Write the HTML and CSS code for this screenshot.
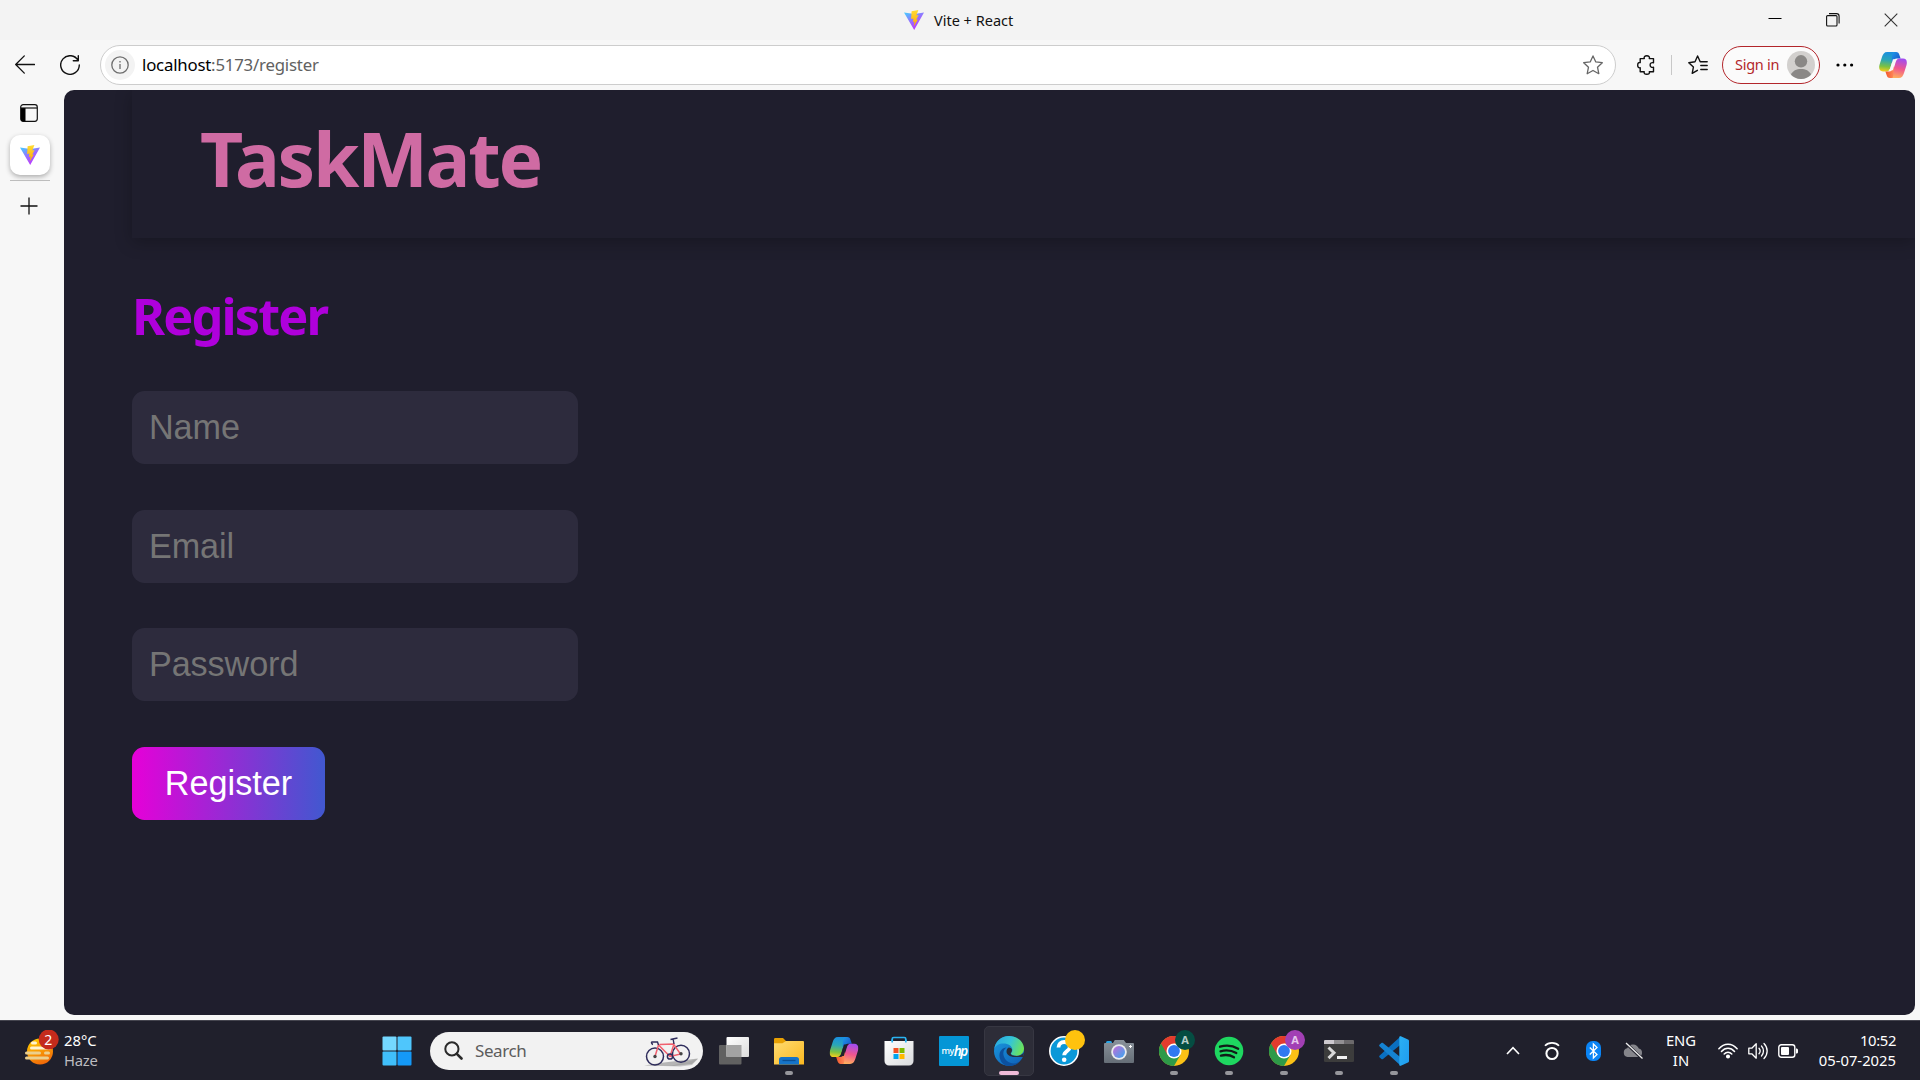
FILE: index.html
```html
<!DOCTYPE html>
<html lang="en">
<head>
<meta charset="utf-8">
<title>Vite + React</title>
<link rel="stylesheet" href="styles.css">
</head>
<body>
<svg class="defs" aria-hidden="true">
  <defs>
    <linearGradient id="vite-body" x1="0" y1="0" x2=".6" y2="1"><stop offset="0" stop-color="#41d1ff"/><stop offset=".55" stop-color="#9a6bff"/><stop offset="1" stop-color="#bd34fe"/></linearGradient>
    <linearGradient id="vite-bolt" x1="0" y1="0" x2="0" y2="1"><stop offset="0" stop-color="#ffdd35"/><stop offset="1" stop-color="#ffa800"/></linearGradient>
    <linearGradient id="cp-left" x1=".4" y1="0" x2=".3" y2="1"><stop offset="0" stop-color="#1a8fe0"/><stop offset=".4" stop-color="#2aa6b8"/><stop offset=".75" stop-color="#7cc142"/><stop offset="1" stop-color="#f5cd1c"/></linearGradient>
    <linearGradient id="cp-right" x1=".6" y1="0" x2=".4" y2="1"><stop offset="0" stop-color="#a24cf0"/><stop offset=".5" stop-color="#f0568e"/><stop offset="1" stop-color="#ffb05c"/></linearGradient>
    <linearGradient id="cp-top" x1="0" y1="0" x2="1" y2="1"><stop offset="0" stop-color="#1c9be8"/><stop offset="1" stop-color="#1b3fc4"/></linearGradient>
    <linearGradient id="cp-bot" x1="0" y1="0" x2="1" y2="0"><stop offset="0" stop-color="#f2572b"/><stop offset="1" stop-color="#ff8a5c"/></linearGradient>
    <linearGradient id="sun" x1=".3" y1="0" x2=".7" y2="1"><stop offset="0" stop-color="#ffc800"/><stop offset="1" stop-color="#f0640a"/></linearGradient>
    <linearGradient id="folder" x1="0" y1="0" x2="1" y2="1"><stop offset="0" stop-color="#ffdc72"/><stop offset="1" stop-color="#fbb820"/></linearGradient>
    <linearGradient id="bag" x1="0" y1="0" x2="1" y2="1"><stop offset="0" stop-color="#fff"/><stop offset="1" stop-color="#d9dadd"/></linearGradient>
    <linearGradient id="edge-top" x1="0" y1=".3" x2="1" y2=".6"><stop offset="0" stop-color="#2aa9e0"/><stop offset=".5" stop-color="#35c5d6"/><stop offset="1" stop-color="#6fe552"/></linearGradient>
    <linearGradient id="edge-mid" x1="0" y1="0" x2=".8" y2="1"><stop offset="0" stop-color="#1b9be0"/><stop offset="1" stop-color="#0f62b8"/></linearGradient>
    <linearGradient id="cam" x1="0" y1="0" x2="0" y2="1"><stop offset="0" stop-color="#89929b"/><stop offset="1" stop-color="#666e77"/></linearGradient>
    <linearGradient id="lens" x1="0" y1="0" x2="1" y2="1"><stop offset="0" stop-color="#c56bd6"/><stop offset="1" stop-color="#38a8f0"/></linearGradient>
    <linearGradient id="tv" x1="0" y1="0" x2="1" y2="1"><stop offset="0" stop-color="#fff"/><stop offset="1" stop-color="#dcdcdc"/></linearGradient>
    <linearGradient id="code" x1="0" y1="0" x2="1" y2="1"><stop offset="0" stop-color="#2bb0f2"/><stop offset="1" stop-color="#1f9cf0"/></linearGradient>
    <symbol id="vite" viewBox="0 0 20 20"><path d="M0 2.6 10.2 20 20 2.4 10.5 4.1z" fill="url(#vite-body)"/><path d="M14.4 0 7.6 1.3 7.1 8.9 9.4 8.4 8.9 11.9 10.6 11.4 9.7 16.4 13.9 9.4 12.2 9.7 14.6 5 12.3 5.5z" fill="url(#vite-bolt)"/></symbol>
    <symbol id="copilot" viewBox="0 0 28 26"><path d="M18.2 0H8.2C5.2 0 4 2 3 5L.6 12.5C-.6 16.6.6 19.4 4 19.4h3.4c2.2 0 3.2-1.4 3.8-3.2L15 4c.5-2 1.500-4 3.200-4z" fill="url(#cp-left)"/><path d="M14.500 0H17c2 0 2.900 1.200 3.400 3l1.200 3.600h-3.800c-2.200 0-3 1.400-3.600 3.200l-1.200 3.400c0-5-1-11.200 1.500-13.200z" fill="url(#cp-top)"/><path d="M9.800 26h10c3 0 4.200-2 5.200-5l2.400-7.500C28.600 9.400 27.400 6.600 24 6.600h-3.400c-2.200 0-3.200 1.400-3.800 3.200L13 22c-.5 2-1.500 4-3.200 4z" fill="url(#cp-right)"/><path d="M13.500 26H11c-2 0-2.900-1.200-3.400-3l-1.200-3.600h3.800c2.200 0 3-1.400 3.600-3.200l1.200-3.400c-.3 5-.3 11.200-1.500 13.200z" fill="url(#cp-bot)"/><path class="hole" d="M13.900 7.200h4.300c-1.100.4-1.600 1.400-2 2.600l-2.400 8.500H9.600c1-.4 1.500-1.200 1.800-2.200z"/></symbol>
    <symbol id="chrome" viewBox="0 0 30 30"><circle cx="15" cy="15" r="15" fill="#fbc116"/><path d="M15 15 2 7.500A15 15 0 0 0 15 30l6.500-11.200z" fill="#2d9a48"/><path d="M15 15 8.500 18.700 2 7.500A15 15 0 0 1 28 7.500H15z" fill="#e33b2e"/><circle cx="15" cy="15" r="7.500" fill="#fff"/><circle cx="15" cy="15" r="5.900" fill="#3078f0"/></symbol>
  </defs>
</svg>

<div class="titlebar">
  <div class="tab-title"><svg class="i20"><use href="#vite"/></svg><span class="title-text">Vite + React</span></div>
  <div class="window-buttons">
    <svg width="14" height="14" viewBox="0 0 14 14"><path d="M.5 5.500h13" stroke="#000" stroke-width="1"/></svg>
    <svg width="14" height="14" viewBox="0 0 14 14" fill="none" stroke="#111" stroke-width="1.100"><rect x=".6" y="2.600" width="10.400" height="10.400" rx="1"/><path d="M3 .6h7.500a2.600 2.600 0 0 1 2.600 2.600V10.500"/></svg>
    <svg width="14" height="14" viewBox="0 0 14 14"><path d="M.7.700l12.600 12.600M13.300.700.7 13.300" stroke="#333" stroke-width="1.100"/></svg>
  </div>
</div>

<div class="toolbar">
  <svg class="back" width="20" height="20" viewBox="0 0 20 20" fill="none" stroke="#111" stroke-width="1.300" stroke-linecap="round" stroke-linejoin="round"><path d="M19.500 9.500H.8M9.300.900.7 9.500l8.600 8.600"/></svg>
  <svg class="reload" width="20" height="20" viewBox="0 0 20 20" fill="none" stroke="#111" stroke-width="1.400" stroke-linecap="round" stroke-linejoin="round"><path d="M18.200 5.600A9.300 9.300 0 1 0 19.300 10M18.300.700v5h-5"/></svg>
  <div class="address">
    <span class="info"><svg width="18" height="18" viewBox="0 0 18 18" fill="none" stroke="#6e6e6e" stroke-width="1.300"><circle cx="9" cy="9" r="8.200"/><path d="M9 8v5M9 5v1.400"/></svg></span>
    <span class="url"><span class="host">localhost</span>:5173/register</span>
    <svg class="star" width="20" height="20" viewBox="0 0 20 20" fill="none" stroke="#666" stroke-width="1.300" stroke-linejoin="round"><path d="M10 .9l2.800 6 6.500.8-4.800 4.500 1.300 6.500L10 15.500l-5.800 3.200 1.300-6.500L.7 7.700l6.500-.8z"/></svg>
  </div>
  <svg class="puzzle" width="18" height="20" viewBox="0 0 18 20" fill="none" stroke="#111" stroke-width="1.400" stroke-linejoin="round"><path d="M3.200 3.600h4.100C6.600 1.800 8 .8 9.800.8s3.200 1 2.500 2.800h4.200v4.200c-2-.7-3.400.5-3.400 2.200s1.400 2.900 3.400 2.200v4.600h-4.200c.7 1.800-.7 2.500-2.500 2.500s-3.200-.7-2.500-2.500H3.200v-4C1.500 13.200.7 12 .7 10.200s.8-3 2.500-2.600z"/></svg>
  <span class="divider"></span>
  <svg class="favs" width="20" height="20" viewBox="0 0 20 20" fill="none" stroke="#111" stroke-width="1.400" stroke-linejoin="round" stroke-linecap="round"><path d="M12.200 6.800 9.600 1 7 6.800.8 7.700l4.600 4.400-1.200 6.300 5.200-3.100M12.200 6.800h7M12.800 10.500h6.400M12.800 14.500h6.400"/></svg>
  <div class="signin"><span class="signin-text">Sign in</span>
    <svg width="28" height="28" viewBox="0 0 28 28"><circle cx="14" cy="14" r="14" fill="#d2d0ce"/><circle cx="14" cy="10.300" r="6.200" fill="#8a8886"/><path d="M4 23.800C5.500 19.700 9.500 18 14 18s8.500 1.700 10 5.800A14 14 0 0 1 4 23.800z" fill="#8a8886"/></svg>
  </div>
  <svg class="dots" width="18" height="4" viewBox="0 0 18 4"><circle cx="2" cy="2" r="1.600"/><circle cx="8.800" cy="2" r="1.600"/><circle cx="15.600" cy="2" r="1.600"/></svg>
  <svg class="copilot-btn" width="28" height="26"><use href="#copilot"/></svg>
</div>

<div class="main">
  <aside class="sidebar">
    <svg class="tabs-icon" width="18" height="18" viewBox="0 0 18 18"><rect x=".7" y=".7" width="16.600" height="16.600" rx="2.500" fill="#f7f7f7" stroke="#111" stroke-width="1.200"/><path d="M1 4h4.500v13.300H3A2 2 0 0 1 1 15z"/><path d="M1 4h16" stroke="#111" stroke-width="1.200"/></svg>
    <div class="active-tab"><svg class="i20"><use href="#vite"/></svg></div>
    <span class="side-line"></span>
    <svg class="plus" width="18" height="18" viewBox="0 0 18 18"><path d="M.5 9h17M9 .5v17" stroke="#111" stroke-width="1.300"/></svg>
  </aside>
  <div class="page">
    <nav class="navbar"><h1 class="brand">TaskMate</h1></nav>
    <h2 class="heading">Register</h2>
    <form class="form">
      <input type="text" placeholder="Name">
      <input type="email" placeholder="Email">
      <input type="password" placeholder="Password">
      <button type="button">Register</button>
    </form>
  </div>
</div>

<footer class="taskbar">
  <div class="weather">
    <svg width="34" height="36" viewBox="0 0 34 36"><circle cx="15" cy="21.500" r="13" fill="url(#sun)"/><path d="M7.500 13h3M6.500 18h18" stroke="#fff3d0" stroke-width="3" stroke-linecap="round"/><path d="M20.500 23h3M1.500 23h13M1.500 28h21" stroke="#eccf8c" stroke-width="3" stroke-linecap="round"/><circle cx="23.700" cy="9.500" r="10" fill="#c42b1c"/><text x="23.200" y="14.500" text-anchor="middle" font-size="14" fill="#fff">2</text></svg>
    <div class="weather-text"><span>28°C</span><span class="cond">Haze</span></div>
  </div>
  <div class="start"><svg width="30" height="30" viewBox="0 0 30 30"><rect x=".5" y=".5" width="14" height="14" rx="1" fill="#74d8ff"/><rect x="15.500" y=".5" width="14" height="14" rx="1" fill="#4fc6fc"/><rect x=".5" y="15.500" width="14" height="14" rx="1" fill="#40bffb"/><rect x="15.500" y="15.500" width="14" height="14" rx="1" fill="#1499f7"/></svg></div>
  <div class="search">
    <svg width="19" height="19" viewBox="0 0 19 19" fill="none" stroke="#2a2a2a"><circle cx="7.900" cy="7.900" r="6.600" stroke-width="2"/><path d="M12.800 12.800l4.700 4.700" stroke-width="2.600" stroke-linecap="round"/></svg>
    <span class="search-text">Search</span>
    <svg class="bike" width="55" height="30" viewBox="0 0 55 30" fill="none"><path d="M0 28.500 20 25.500 54 21.500 48 27 30 29z" fill="#b5b5b5"/><path d="M2 28.500h26L50 23l4-1.200-6 6.200-12 1.500z" fill="#9b9b9b" opacity=".5"/><circle cx="11" cy="19.500" r="8.500" stroke="#2f2d5c" stroke-width="1.500"/><circle cx="37" cy="16.700" r="8.500" stroke="#2f2d5c" stroke-width="1.500"/><path d="M11 19.500 14.500 8 26 19.500l10.500-2.500-7-10-14 .5M26 19.500 30 7" stroke="#f0606e" stroke-width="1.500"/><path d="M14.500 8 13.500 5H8c-1 0-.5 2 1 2.500M30 7l-.8-4.500M26.500 2.500l7-1.500" stroke="#2f2d5c" stroke-width="1.400"/><circle cx="26" cy="19.500" r="2.600" stroke="#2f2d5c" stroke-width="1.500"/><circle cx="11" cy="19.500" r="1.700" fill="#444"/><circle cx="37" cy="16.700" r="1.700" fill="#444"/></svg>
  </div>
  <div class="apps">
    <div class="app"><svg viewBox="0 0 30 30"><rect x="0" y="9" width="22.500" height="19.500" rx="1" fill="#616161"/><rect x="7.500" y="1" width="22.500" height="20" rx="1" fill="url(#tv)"/><path d="M7.500 9h15v12h-15z" fill="#a3a3a3"/></svg></div>
    <div class="app running"><svg viewBox="0 0 30 30"><path d="M0 3.200A1.200 1.200 0 0 1 1.200 2H9l3.500 3.500V10H0z" fill="#e8a003"/><path d="M0 7.200h8.500L12 5h17a1 1 0 0 1 1 1v22.500H0z" fill="url(#folder)"/><path d="M5 28.500v-5A2.500 2.500 0 0 1 7.500 21h15a2.500 2.500 0 0 1 2.500 2.500v5z" fill="#1674c9"/><path d="M8.500 24.500h13" stroke="#0b4f94" stroke-width="1.300"/></svg></div>
    <div class="app dark-hole"><svg viewBox="-.5 0 29 27"><use href="#copilot" width="28" height="26"/></svg></div>
    <div class="app"><svg viewBox="0 0 30 30"><path d="M8.200 7V3a1.500 1.500 0 0 1 1.500-1.500h10.600A1.500 1.500 0 0 1 21.800 3v4" fill="none" stroke="#2ab4f2" stroke-width="1.700"/><path d="M.5 5h29v20a4.500 4.500 0 0 1-4.500 4.500H5A4.500 4.500 0 0 1 .5 25z" fill="url(#bag)"/><path d="M8.200 6.500V3.500M21.800 6.500V3.500" stroke="#2ab4f2" stroke-width="1.700"/><path d="M9.500 12h5v5h-5z" fill="#f25022"/><path d="M15.500 12h5v5h-5z" fill="#7fba00"/><path d="M9.500 18h5v5h-5z" fill="#00a4ef"/><path d="M15.500 18h5v5h-5z" fill="#ffb900"/></svg></div>
    <div class="app"><span class="myhp"><span class="my">my</span><span class="hp">hp</span></span></div>
    <div class="app active"><svg viewBox="0 0 30 30"><circle cx="15" cy="15" r="15" fill="url(#edge-mid)"/><path d="M.2 13C1.500 5 7.500 0 15 0c9 0 15 6.500 15 12.500 0 4.500-3.500 7.300-7.500 7.300-3.500 0-5.500-1.300-5.500-2.300 0-.8 1.400-1.300 1.400-3.500 0-3.800-4.200-6.500-8.900-6.500C5 7.500 1.500 9.500.2 13z" fill="url(#edge-top)"/><path d="M12.500 11.500c-2.500 1.600-3.600 4.500-3 7.500.8 4.500 5 8.500 10.500 8.500 3 0 5.800-1.600 7.700-4.400C25 27.500 20.500 30 15 30 9 30 5 24 5.500 18.500c.4-3.800 3-6.700 7-7z" fill="#0c509e"/><path d="M18 14c0 2.200-1.300 2.700-1.300 3.500 0 1.200 2.200 2.500 5.800 2.500 3.300 0 5.800-1.200 7.500-3.500l-1 4.500h-8.500c-4 0-8-2.200-8-5.500 0-2 .9-3.300 2.200-4 1.800.2 3.300 1.200 3.300 2.500z" fill="#2a2d38"/></svg></div>
    <div class="app"><svg viewBox="0 0 30 30"><circle cx="15" cy="15" r="14.200" fill="#0a98d8" stroke="#fff" stroke-width="1.600"/><path d="M9.500 11.500c0-3.500 2.500-5.500 5.700-5.500s5.600 2 5.600 4.900c0 4-5.600 4.100-5.600 8.300" fill="none" stroke="#fff" stroke-width="3.800"/><circle cx="15.200" cy="23.800" r="2.300" fill="#fff"/></svg><span class="badge gold"></span></div>
    <div class="app"><svg viewBox="0 0 30 30"><path d="M2 8V6.500A1.500 1.500 0 0 1 3.500 5h3A1.500 1.500 0 0 1 8 6.500V8z" fill="#27a5e6"/><path d="M1 7h8l1.800-3h9L22 7h7a1 1 0 0 1 1 1v18a1 1 0 0 1-1 1H1a1 1 0 0 1-1-1V8a1 1 0 0 1 1-1z" fill="url(#cam)"/><circle cx="15" cy="16" r="7.800" fill="#e9ebee"/><circle cx="15" cy="16" r="6" fill="url(#lens)"/><path d="M26.500 9v3M25 10.500h3" stroke="#fff"/></svg></div>
    <div class="app running"><svg viewBox="0 0 30 30"><use href="#chrome"/></svg><span class="badge green">A</span></div>
    <div class="app running"><svg viewBox="0 0 30 30"><circle cx="15" cy="15" r="14.300" fill="#1ed760"/><path d="M6 10.700c6-1.700 13-1 18.200 2M6.500 15.300c5.300-1.500 11-.9 15.800 1.700M7 19.700c4.500-1.200 9.200-.7 13 1.600" fill="none" stroke="#111c18" stroke-width="2.300" stroke-linecap="round"/></svg></div>
    <div class="app running"><svg viewBox="0 0 30 30"><use href="#chrome"/></svg><span class="badge purple">A</span></div>
    <div class="app running"><svg viewBox="0 0 30 30"><rect x="0" y="4" width="30" height="22" rx="1.200" fill="#3c3c3c"/><path d="M0 8V5.200A1.200 1.200 0 0 1 1.200 4H10v4z" fill="#cdc9ce"/><path d="M10 4h10v4H10z" fill="#929092"/><path d="M20 4h8.800A1.200 1.200 0 0 1 30 5.200V8H20z" fill="#6c6a6c"/><path d="M4.500 11.500l5.500 5.300-5.500 5.300" fill="none" stroke="#d8d8d8" stroke-width="3"/><path d="M13 21.500h10" stroke="#f2f2f2" stroke-width="3"/></svg></div>
    <div class="app running"><svg viewBox="0 0 30 30"><path d="M21.800.3 0.700 19.500c-.7.600-.7 1.500 0 2l1.700 1.500c.5.400 1.100.400 1.600 0L21.800 8.500z" fill="#0a6fc0"/><path d="M21.800 29.700.7 10.500c-.7-.6-.7-1.500 0-2L2.400 7c.5-.4 1.100-.4 1.600 0l17.800 14.500z" fill="#1583d2"/><path d="M21.800.3 29 3.500a1.500 1.500 0 0 1 1 1.400v20.200a1.500 1.500 0 0 1-1 1.400l-7.200 3.200c-.8.300-1.500-.1-1.500-1V1.300c0-.8.700-1.300 1.500-1z" fill="url(#code)"/></svg></div>
  </div>
  <div class="tray">
    <svg class="chev" width="14" height="9" viewBox="0 0 14 9"><path d="M1 8l6-6.300L13 8" fill="none" stroke="#fff" stroke-width="1.600"/></svg>
    <svg class="ring" width="16" height="20" viewBox="0 0 16 20" fill="none" stroke="#fff"><circle cx="8" cy="12.500" r="5.600" stroke-width="2"/><path d="M1 4.800C4.500.800 11.500.800 15 4.800" stroke-width="1.700"/></svg>
    <svg class="bt" width="15" height="20" viewBox="0 0 15 20"><rect width="15" height="20" rx="6.500" fill="#0a84f5"/><path d="M3.800 6.500l7.200 7-3.600 3.500V3L11 6.500l-7.200 7" fill="none" stroke="#fff" stroke-width="1.300"/></svg>
    <svg class="cloud" width="20" height="17" viewBox="0 0 20 17"><path d="M4.500 15A4.500 4.500 0 0 1 4.200 6.200 6.200 6.200 0 0 1 15.800 6.600 4.300 4.300 0 0 1 15.500 15z" fill="#85858b"/><path d="M2.500.700l16.500 15.800" stroke="#20202c" stroke-width="3"/><path d="M3 1l16.500 15.500" stroke="#eee" stroke-width="1.300"/></svg>
    <div class="lang"><span>ENG</span><span>IN</span></div>
    <svg class="wifi" width="20" height="16" viewBox="0 0 20 16" fill="none" stroke="#fff" stroke-width="1.500" stroke-linecap="round"><path d="M.9 5.800C6-.400 14-.400 19.100 5.800M3.500 8.500C7.200 4.200 12.800 4.200 16.500 8.500M6.200 11C8.400 8.600 11.600 8.600 13.800 11"/><circle cx="10" cy="13.500" r="1.300" fill="#fff"/></svg>
    <svg class="vol" width="20" height="18" viewBox="0 0 20 18" fill="none" stroke="#fff" stroke-width="1.300" stroke-linecap="round" stroke-linejoin="round"><path d="M.8 6.200h3l4.400-4.400v14.400l-4.400-4.400h-3zM11 6.300c1.300 1.500 1.300 3.900 0 5.400M13.500 4c2.600 2.800 2.600 7.200 0 10M16 1.500c4.200 4.200 4.200 10.800 0 15"/></svg>
    <svg class="bat" width="20" height="14" viewBox="0 0 20 14"><rect x=".8" y=".8" width="16" height="12.400" rx="2.500" fill="none" stroke="#fff" stroke-width="1.400"/><rect x="3" y="3" width="8" height="8" rx="1" fill="#fff"/><path d="M18 4.500c1.300 0 2 .7 2 1.600v1.800c0 .9-.7 1.600-2 1.600z" fill="#fff"/></svg>
    <div class="clock"><span class="time">10:52</span><span>05-07-2025</span></div>
  </div>
</footer>
</body>
</html>
```
FILE: styles.css
```css
* { box-sizing: border-box; }
body { margin: 0; width: 1920px; height: 1080px; overflow: hidden; display: flex; flex-direction: column; background: #f7f7f7; font-family: "Noto Sans", "Open Sans", sans-serif; --hole: #f7f7f7; }
svg { display: block; flex: none; }
.defs { position: absolute; width: 0; height: 0; }
.hole { fill: var(--hole); }
.dark-hole { --hole: #20202c; }
.i20 { width: 20px; height: 20px; }

.titlebar { height: 40px; flex: none; display: flex; align-items: center; background: #f3f3f3; }
.tab-title { display: flex; align-items: center; gap: 10px; margin-left: 904px; width: 600px; }
.title-text { font-size: 14.500px; line-height: 20px; color: #111; }
.window-buttons { display: flex; gap: 44px; margin-left: auto; padding-right: 22px; }

.toolbar { height: 50px; flex: none; display: flex; align-items: center; }
.back { margin-left: 15px; }
.reload { margin: 0 20px 0 25px; }
.address { width: 1516px; height: 40px; display: flex; align-items: center; padding: 0 12px 0 4px; border: 1px solid #cdcdcd; border-radius: 20px; background: #fff; }
.info { width: 30px; height: 30px; border-radius: 50%; background: #f3f3f3; display: flex; align-items: center; justify-content: center; }
.url { margin-left: 7px; font-size: 16.800px; letter-spacing: -.200px; line-height: 24px; color: #616161; }
.host { color: #000; }
.star { margin-left: auto; }
.puzzle { margin-left: 21px; }
.divider { width: 1px; height: 20px; margin: 0 16px; background: #c8c8c8; }
.signin { width: 98px; height: 38px; margin-left: 14px; display: flex; align-items: center; justify-content: space-between; padding: 0 4px 0 12px; border: 1px solid #b3262b; border-radius: 19px; background: #fbfbfb; }
.signin-text { margin-bottom: 2px; font-size: 14.500px; letter-spacing: -.250px; color: #b3262b; white-space: nowrap; }
.dots { margin-left: 16px; }
.copilot-btn { margin-left: 25px; }

.main { flex: 1; min-height: 0; display: flex; padding: 0 5px 5px 0; }
.sidebar { width: 64px; display: flex; flex-direction: column; padding: 14px 0 0 10px; }
.tabs-icon { margin-left: 10px; }
.active-tab { width: 40px; height: 40px; margin-top: 13px; border-radius: 10px; background: #fff; display: flex; align-items: center; justify-content: center; box-shadow: 0 2px 5px rgba(0,0,0,.3); }
.side-line { width: 40px; height: 1px; margin-top: 5px; background: #bdbdbd; }
.plus { margin: 16px 0 0 10px; }

.page { flex: 1; overflow: hidden; padding-left: 68px; border-radius: 10px; background: #1f1e2d; }
.navbar { height: 148px; padding: 23px 0 0 68px; box-shadow: 0 4px 16px rgba(0,0,0,.25); }
.brand { margin: 0; font-size: 75px; line-height: 90px; font-weight: 700; letter-spacing: -2.300px; color: #cf6ba3; }
.heading { margin: 46px 0 0; font-size: 50.500px; line-height: 64px; font-weight: 700; letter-spacing: -1.900px; color: #af00db; }
.form { display: flex; flex-direction: column; align-items: flex-start; gap: 45.700px; margin-top: 43px; }
.form input, .form button { height: 73px; border: 0; border-radius: 12.500px; font-family: "Liberation Sans", Arial, sans-serif; font-size: 34.200px; }
.form input { width: 446px; padding: 0 17px; background: #2d2b3d; color: #fff; letter-spacing: -.100px; }
.form input::placeholder { color: #757575; }
.form button { width: 193px; padding: 0; color: #fff; background: linear-gradient(90deg, #e600d8, #4158d0); }

.taskbar { height: 60px; flex: none; display: flex; align-items: center; background: #20202c; border-top: 1px solid #45454f; color: #fff; font-size: 14.800px; line-height: 20px; }
.weather { width: 347px; margin-left: 25px; display: flex; gap: 5px; }
.weather-text, .lang, .clock { display: flex; flex-direction: column; margin-bottom: 2px; }
.cond { color: #bcbcc0; letter-spacing: -.200px; }
.start { width: 50px; display: flex; justify-content: center; }
.search { width: 273px; height: 38px; margin: 0 6px 0 8px; padding-left: 14px; display: flex; align-items: center; border-radius: 19px; background: #f2f2f2; }
.search-text { margin-left: 12px; font-size: 17px; letter-spacing: -.400px; color: #5c5c5c; }
.bike { margin: 2px 4px 0 auto; }
.apps { display: flex; gap: 5px; }
.app { position: relative; width: 50px; height: 50px; display: flex; align-items: center; justify-content: center; border-radius: 5px; }
.app svg { width: 30px; height: 30px; }
.app.active { background: #2d2d38; border: 1px solid #373742; }
.running::after, .active::after { content: ""; position: absolute; left: 50%; bottom: 1px; width: 8px; height: 4px; margin-left: -4px; border-radius: 2px; background: #96969c; }
.active::after { bottom: 0; width: 20px; margin-left: -10px; background: #efbad8; }
.badge { position: absolute; left: 26px; top: 4px; width: 20px; height: 20px; border-radius: 50%; font-size: 11px; font-weight: 700; text-align: center; }
.gold { background: #ffc20e; }
.green { background: #054d42; color: #b6ccc8; }
.purple { background: #a23fb4; color: #e6c6ec; }
.myhp { width: 30px; height: 30px; display: flex; align-items: center; justify-content: center; background: #0496d6; border-radius: 1px; letter-spacing: -.500px; line-height: 30px; }
.my { font-size: 9px; font-weight: 500; }
.hp { font-size: 13.500px; font-style: italic; font-weight: 600; letter-spacing: -1.700px; }
.tray { margin-left: auto; display: flex; align-items: center; padding-right: 24px; }
.ring { margin-left: 24px; }
.bt { margin-left: 26px; }
.cloud { margin-left: 22px; }
.lang { margin-left: 23px; width: 30px; align-items: center; }
.wifi { margin-left: 22px; }
.vol, .bat { margin-left: 10px; }
.clock { width: 98px; align-items: flex-end; }
.time { letter-spacing: -.350px; }
```
